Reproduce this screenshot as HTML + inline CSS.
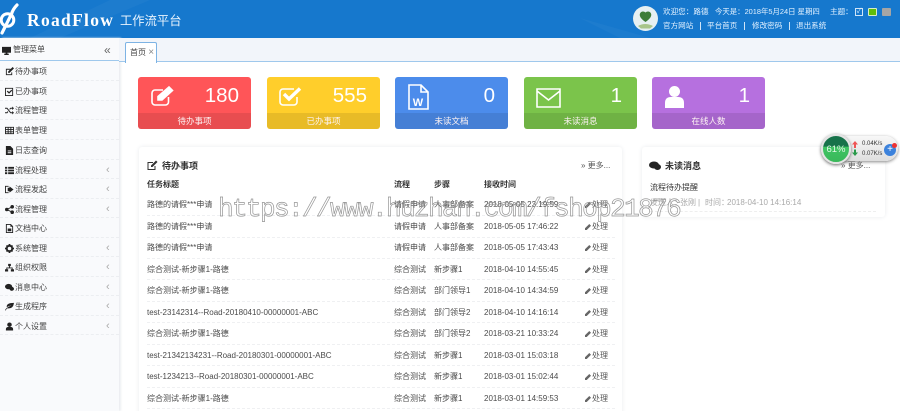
<!DOCTYPE html>
<html lang="zh"><head><meta charset="utf-8"><title>RoadFlow</title>
<style>
*{box-sizing:border-box;margin:0;padding:0}
html,body{width:900px;height:411px;overflow:hidden;background:#fff}
body{position:relative;font:8px/10px "Liberation Sans","Noto Sans CJK SC",sans-serif;color:#4a4a4a;filter:blur(.35px)}
.a{position:absolute;white-space:nowrap}
.hdr{left:0;top:0;width:900px;height:38px;background:#1678cd}
.hl{color:#e2f1ff;font-size:7.6px}
.side{left:0;top:38px;width:119px;height:373px;background:#f9fafc;box-shadow:2px 0 2px #eceef1}
.tabs{left:119px;top:38px;width:781px;height:24px;background:#f2f5fa;border-bottom:1px solid #9fc8ec}
.tab{left:125px;top:42px;width:32px;height:21px;background:#fff;border:1px solid #7db3e4;border-bottom:0;border-radius:2px 2px 0 0;font-size:8px;line-height:20px;padding-left:4px;color:#444}
.m{left:0;width:119px;height:19.6px;border-bottom:1px dashed #eceef1;font-size:8px;line-height:21.5px;color:#444}
.m svg{position:absolute;left:5px;top:6px;width:9px;height:9px;fill:#222}
.m b{position:absolute;left:15px;font-weight:400}
.m i{position:absolute;left:106px;top:0;font-style:normal;color:#aaa;font-size:11px;line-height:21px}
.card{top:77px;width:113px;height:52px;border-radius:3px;color:#fff;overflow:hidden}
.card u{position:absolute;left:0;top:36px;width:100%;height:16px;background:rgba(0,0,0,.09);text-align:center;text-decoration:none;font-size:8.5px;line-height:16px;color:#fdf3f3}
.card em{position:absolute;right:13px;top:6px;font:20.5px/26px "Liberation Sans",sans-serif}
.card svg{position:absolute;fill:none;stroke:#fff;stroke-width:1.6}
.pan{background:#fff;border-radius:3px;box-shadow:0 0 5px #e9ebee}
.r{left:147px;width:468px;height:21.6px;border-bottom:1px dashed #eff0f2;line-height:21.5px;color:#4a4a4a}
.r span{position:absolute;top:0}
.r svg{position:absolute;left:438px;top:8px;width:6px;height:6px;fill:#666}
.c1{left:0}.c2{left:247px}.c3{left:287px}.c4{left:337px}.c5{left:445px;color:#555}
.wm{left:218px;top:194px;font:26px/30px "Liberation Mono",monospace;letter-spacing:-1.6px;color:transparent;-webkit-text-stroke:.7px #959595}
</style></head><body>
<div class="a hdr"></div>
<svg class="a" style="left:0;top:0" width="900" height="38"><path d="M30 38L110 0h40L60 38zM620 38l-40-20 70 20z" fill="#fff" opacity=".03"/></svg>
<svg class="a" style="left:0;top:0" width="20" height="36" viewBox="0 0 20 36"><circle cx="7.500" cy="20" r="6.300" fill="none" stroke="#fff" stroke-width="3"/><path d="M2 33L11.500 14Q13 9 17 5" fill="none" stroke="#fff" stroke-width="3.200" stroke-linecap="round"/></svg>
<div class="a" style="left:27px;top:9px;font:bold 17.5px/22px 'Liberation Serif',serif;color:#fff;letter-spacing:1.3px">RoadFlow</div>
<div class="a" style="left:120px;top:14px;font-size:12.3px;line-height:15px;color:#e8f3fd">工作流平台</div>
<svg class="a" style="left:633px;top:6px" width="25" height="25" viewBox="0 0 25 25"><circle cx="12.5" cy="12.5" r="12.5" fill="#e6f0f2"/><path d="M12.500 16C8 13 6 10 7 7.500 8 5 11 5 12.500 6.500 14 5 17 5 18 7.500 19 10 17 13 12.500 16z" fill="#3d7d38"/><path d="M5 20q7-4 15 0l-3 2.500H8z" fill="#a8c58a"/></svg>
<div class="a hl" style="left:663px;top:7px">欢迎您：路德</div>
<div class="a hl" style="left:715px;top:7px;font-size:7.4px">今天是：2018年5月24日 星期四</div>
<div class="a hl" style="left:830px;top:7px">主题：</div>
<div class="a" style="left:855px;top:8px;width:8px;height:8px;border:1px solid #cfe4f7;color:#dbeeff;font-size:7px;line-height:6px;text-align:center">✓</div>
<div class="a" style="left:868px;top:8px;width:9px;height:8px;background:#5fbd0c;border:1px solid #d8ecc8;border-radius:1px"></div>
<div class="a" style="left:882px;top:8px;width:9px;height:8px;background:#a5a5a5;border-radius:1px"></div>
<div class="a hl" style="left:663px;top:21px">官方网站</div><div class="a" style="left:700px;top:22px;width:1px;height:8px;background:#cfe4f7"></div>
<div class="a hl" style="left:707px;top:21px">平台首页</div><div class="a" style="left:744px;top:22px;width:1px;height:8px;background:#cfe4f7"></div>
<div class="a hl" style="left:752px;top:21px">修改密码</div><div class="a" style="left:789px;top:22px;width:1px;height:8px;background:#cfe4f7"></div>
<div class="a hl" style="left:796px;top:21px">退出系统</div>

<div class="a side"></div>
<div class="a tabs"></div>
<div class="a tab">首页 <span style="color:#888;font-size:10px">×</span></div>

<div class="a m" style="top:40px;border-bottom:1px solid #9fc8ec;height:21px"><svg viewBox="0 0 10 10" style="left:1px;top:6px;width:11px;height:9px"><path d="M0 1h10v6.5H6v1h1.5V10h-5V8.500H4v-1H0z"/></svg><b style="left:13px;top:0;line-height:20px">管理菜单</b><i style="left:104px;color:#666;font-size:12px;line-height:20px">«</i></div>
<div class="a m" style="top:61px"><svg viewBox="0 0 10 10"><path d="M1 2h5v1H2v5h5V6h1v3H1zM8.500 0 10 1.500 5 6.500H3.500V5z"/></svg><b>待办事项</b></div>
<div class="a m" style="top:81px"><svg viewBox="0 0 10 10"><path d="M0 1h9v9H0zm1 1v7h7V2zm1 3 1-1 1.500 1.500L7 3l1 1-3.500 3.500z"/></svg><b>已办事项</b></div>
<div class="a m" style="top:100px"><svg viewBox="0 0 10 10"><path d="M0 2h2.500l4 5H8V5.500L10 7.500 8 9.500V8H6L2 3H0zm0 5h2l1-1.300.7.8L2.500 8H0zM6 2h2V.5L10 2.500 8 4.500V3H6.500L5.500 4.200l-.7-.8z"/></svg><b>流程管理</b></div>
<div class="a m" style="top:120px"><svg viewBox="0 0 10 10"><path d="M0 1h10v8H0zm1 1v1.500h2V2zm3 0v1.500h2V2zm3 0v1.500h2V2zM1 4.500V6h2V4.500zm3 0V6h2V4.500zm3 0V6h2V4.500zM1 7v1h2V7zm3 0v1h2V7zm3 0v1h2V7z"/></svg><b>表单管理</b></div>
<div class="a m" style="top:140px"><svg viewBox="0 0 10 10"><path d="M1 0h5l3 3v7H1zm2 5v1h4V5zm0 2v1h4V7z"/></svg><b>日志查询</b></div>
<div class="a m" style="top:159.500px"><svg viewBox="0 0 10 10"><path d="M0 1h2.500v2H0zm3.500 0H10v2H3.500zM0 4h2.500v2H0zm3.500 0H10v2H3.500zM0 7h2.500v2H0zm3.500 0H10v2H3.500z"/></svg><b>流程处理</b><i>‹</i></div>
<div class="a m" style="top:179px"><svg viewBox="0 0 10 10"><path d="M4 1H0v8h4V8H1V2h3zM5 3V1.500L9.500 5 5 8.500V7H3V3z"/></svg><b>流程发起</b><i>‹</i></div>
<div class="a m" style="top:198.500px"><svg viewBox="0 0 10 10"><circle cx="2" cy="5" r="2"/><circle cx="8" cy="2" r="2"/><circle cx="8" cy="8" r="2"/><path d="M2 5l6-3M2 5l6 3" stroke="#222"/></svg><b>流程管理</b><i>‹</i></div>
<div class="a m" style="top:218px"><svg viewBox="0 0 10 10"><path d="M1 0h5.500L9 2.500V10H1zm1 1v8h6V3H6V1zm1 4h4v3H3z"/></svg><b>文档中心</b></div>
<div class="a m" style="top:237.500px"><svg viewBox="0 0 10 10"><circle cx="5" cy="5" r="3" fill="none" stroke="#222" stroke-width="2"/><path d="M4 0h2v2H4zM4 8h2v2H4zM0 4h2v2H0zM8 4h2v2H8zM1 2.300 2.300 1l1 1L2 3.300zM7.700 1 9 2.300 8 3.300 6.700 2zM2 6.700l1.300 1.300-1 1L1 7.700zM8 6.700 9 7.700 7.700 9l-1-1z"/></svg><b>系统管理</b><i>‹</i></div>
<div class="a m" style="top:257px"><svg viewBox="0 0 10 10"><path d="M3.500 1h3v2.500h-1V5H8.500v2H10v2.500H6.500V7H7.500V6h-5v1h1v2.500H0V7h1.500V5h3V3.500h-1z"/></svg><b>组织权限</b><i>‹</i></div>
<div class="a m" style="top:276.500px"><svg viewBox="0 0 10 10"><ellipse cx="4" cy="4" rx="4" ry="3"/><ellipse cx="7.500" cy="6.500" rx="2.500" ry="2.200"/></svg><b>消息中心</b><i>‹</i></div>
<div class="a m" style="top:296px"><svg viewBox="0 0 10 10"><path d="M0 9q1-2 3-3 2-1.500 4-2-3 0-5 2Q1 1 10 1 9 8 3 7 1 8 1 9.500z"/></svg><b>生成程序</b><i>‹</i></div>
<div class="a m" style="top:315.500px"><svg viewBox="0 0 10 10"><circle cx="5" cy="3" r="2.500"/><path d="M1 9.500V8q0-2.500 2.500-2.500h3Q9 5.500 9 8v1.500z"/></svg><b>个人设置</b><i>‹</i></div>

<div class="a card" style="left:138px;background:#ff5558"><svg width="25" height="20" viewBox="0 0 25 20" style="left:13px;top:9px"><path d="M17.500 11v5a3 3 0 0 1-3 3H4a3 3 0 0 1-3-3V7a3 3 0 0 1 3-3h8"/><path d="M7 14v-3.500L18 1l3.500 3.500L11 14z" fill="#fff"/></svg><em style="right:12px">180</em><u>待办事项</u></div>
<div class="a card" style="left:267px;background:#ffce2b"><svg width="24" height="20" viewBox="0 0 24 20" style="left:12px;top:9px"><path d="M18 11v5a3 3 0 0 1-3 3H4a3 3 0 0 1-3-3V6a3 3 0 0 1 3-3h11"/><path d="M5 8l5 5L21 2.500" stroke-width="3.400"/></svg><em>555</em><u>已办事项</u></div>
<div class="a card" style="left:395px;background:#4c8ceb"><svg width="21" height="26" viewBox="0 0 21 26" style="left:13px;top:7px"><path d="M1 1h12l7 7v17H1zM13 1v7h7"/><text x="10" y="22" text-anchor="middle" style="font:bold 11px 'Liberation Sans',sans-serif;fill:#fff;stroke:none">W</text></svg><em>0</em><u>未读文档</u></div>
<div class="a card" style="left:524px;background:#7bc44b"><svg width="25" height="20" viewBox="0 0 25 20" style="left:12px;top:11px"><path d="M1 1h23v18H1zM1 3l11.500 9L24 3"/></svg><em style="right:15px">1</em><u>未读消息</u></div>
<div class="a card" style="left:652px;background:#b670df"><svg width="19" height="22" viewBox="0 0 19 22" style="left:13px;top:9px"><circle cx="9.500" cy="5.500" r="5.500" fill="#fff" stroke="none"/><path d="M0 22v-5q0-6 6-6h7q6 0 6 6v5z" fill="#fff" stroke="none"/></svg><em style="right:15px">1</em><u>在线人数</u></div>

<div class="a pan" style="left:139px;top:147px;width:483px;height:270px"></div>
<svg class="a" style="left:147px;top:160px" width="11" height="11" viewBox="0 0 11 11"><path d="M8 6v3.500H1v-7h5" fill="none" stroke="#333"/><path d="M4 7V5.500L9 .5l1.500 1.500-5 5z" fill="#333"/></svg>
<div class="a" style="left:162px;top:161px;font-size:9px;font-weight:bold;color:#333">待办事项</div>
<div class="a" style="left:581px;top:161px;color:#555">» 更多...</div>
<div class="a" style="left:147px;top:180px;font-weight:bold;color:#333;font-size:8px">任务标题</div>
<div class="a" style="left:394px;top:180px;font-weight:bold;color:#333">流程</div>
<div class="a" style="left:434px;top:180px;font-weight:bold;color:#333">步骤</div>
<div class="a" style="left:484px;top:180px;font-weight:bold;color:#333">接收时间</div>

<div class="a r" style="top:194px"><span class="c1">路德的请假***申请</span><span class="c2">请假申请</span><span class="c3">人事部备案</span><span class="c4">2018-05-05 23:19:59</span><svg viewBox="0 0 7 7"><path d="M0 7V5L5 0l2 2-5 5z"/></svg><span class="c5">处理</span></div>
<div class="a r" style="top:216px"><span class="c1">路德的请假***申请</span><span class="c2">请假申请</span><span class="c3">人事部备案</span><span class="c4">2018-05-05 17:46:22</span><svg viewBox="0 0 7 7"><path d="M0 7V5L5 0l2 2-5 5z"/></svg><span class="c5">处理</span></div>
<div class="a r" style="top:237px"><span class="c1">路德的请假***申请</span><span class="c2">请假申请</span><span class="c3">人事部备案</span><span class="c4">2018-05-05 17:43:43</span><svg viewBox="0 0 7 7"><path d="M0 7V5L5 0l2 2-5 5z"/></svg><span class="c5">处理</span></div>
<div class="a r" style="top:258.500px"><span class="c1">综合测试-新步骤1-路德</span><span class="c2">综合测试</span><span class="c3">新步骤1</span><span class="c4">2018-04-10 14:55:45</span><svg viewBox="0 0 7 7"><path d="M0 7V5L5 0l2 2-5 5z"/></svg><span class="c5">处理</span></div>
<div class="a r" style="top:280px"><span class="c1">综合测试-新步骤1-路德</span><span class="c2">综合测试</span><span class="c3">部门领导1</span><span class="c4">2018-04-10 14:34:59</span><svg viewBox="0 0 7 7"><path d="M0 7V5L5 0l2 2-5 5z"/></svg><span class="c5">处理</span></div>
<div class="a r" style="top:301.500px"><span class="c1">test-23142314--Road-20180410-00000001-ABC</span><span class="c2">综合测试</span><span class="c3">部门领导2</span><span class="c4">2018-04-10 14:16:14</span><svg viewBox="0 0 7 7"><path d="M0 7V5L5 0l2 2-5 5z"/></svg><span class="c5">处理</span></div>
<div class="a r" style="top:323px"><span class="c1">综合测试-新步骤1-路德</span><span class="c2">综合测试</span><span class="c3">部门领导2</span><span class="c4">2018-03-21 10:33:24</span><svg viewBox="0 0 7 7"><path d="M0 7V5L5 0l2 2-5 5z"/></svg><span class="c5">处理</span></div>
<div class="a r" style="top:344.500px"><span class="c1">test-21342134231--Road-20180301-00000001-ABC</span><span class="c2">综合测试</span><span class="c3">新步骤1</span><span class="c4">2018-03-01 15:03:18</span><svg viewBox="0 0 7 7"><path d="M0 7V5L5 0l2 2-5 5z"/></svg><span class="c5">处理</span></div>
<div class="a r" style="top:366px"><span class="c1">test-1234213--Road-20180301-00000001-ABC</span><span class="c2">综合测试</span><span class="c3">新步骤1</span><span class="c4">2018-03-01 15:02:44</span><svg viewBox="0 0 7 7"><path d="M0 7V5L5 0l2 2-5 5z"/></svg><span class="c5">处理</span></div>
<div class="a r" style="top:387.500px"><span class="c1">综合测试-新步骤1-路德</span><span class="c2">综合测试</span><span class="c3">新步骤1</span><span class="c4">2018-03-01 14:59:53</span><svg viewBox="0 0 7 7"><path d="M0 7V5L5 0l2 2-5 5z"/></svg><span class="c5">处理</span></div>

<div class="a pan" style="left:642px;top:147px;width:243px;height:70px"></div>
<svg class="a" style="left:649px;top:161px" width="12" height="10" viewBox="0 0 12 10"><ellipse cx="5" cy="4" rx="5" ry="3.500" fill="#222"/><ellipse cx="8.500" cy="6" rx="3.500" ry="3" fill="#222"/></svg>
<div class="a" style="left:665px;top:161px;font-size:9px;font-weight:bold;color:#333">未读消息</div>
<div class="a" style="left:841px;top:161px;color:#555">» 更多...</div>
<div class="a" style="left:650px;top:183px;color:#333">流程待办提醒</div>
<div class="a" style="left:650px;top:198px;color:#aaa">发送人：</div>
<div class="a" style="left:680px;top:198px;color:#aaa">张刚</div>
<div class="a" style="left:698px;top:198px;color:#aaa">|</div>
<div class="a" style="left:705px;top:198px;color:#aaa">时间：</div>
<div class="a" style="left:727px;top:198px;color:#aaa">2018-04-10 14:16:14</div>
<div class="a" style="left:650px;top:211px;width:226px;border-top:1px dashed #eee"></div>

<div class="a wm">https://www.huzhan.com/fshop21876</div>

<div class="a" style="left:833px;top:136px;width:65px;height:25px;border-radius:13px;background:linear-gradient(#f8f8f8,#dedede);box-shadow:0 1px 3px #888"></div>
<div class="a" style="left:821px;top:134px;width:30px;height:30px;border-radius:50%;background:linear-gradient(#17724a 0,#17724a 40%,#3fc463 42%,#39b85a 100%);border:2px solid #e4e4e4;box-shadow:0 1px 3px #666;color:#e4f8e8;font-size:9.500px;line-height:27px;text-align:center">61%</div>
<svg class="a" style="left:851px;top:140px" width="8" height="20" viewBox="0 0 8 20"><path d="M4 1L1 4.500h2V8h2V4.500h2z" fill="#e55"/><path d="M4 16L1 12.500h2V9.500h2v3h2z" fill="#2a9a4a"/></svg>
<div class="a" style="left:862px;top:139px;font-size:6px;color:#333">0.04K/s</div>
<div class="a" style="left:862px;top:149px;font-size:6px;color:#333">0.07K/s</div>
<div class="a" style="left:884px;top:144px;width:12px;height:12px;border-radius:50%;background:#3c82dc;color:#fff;font-size:10px;line-height:12px;text-align:center">+</div>
<div class="a" style="left:892px;top:143px;width:5px;height:5px;border-radius:50%;background:#e33"></div>
</body></html>
